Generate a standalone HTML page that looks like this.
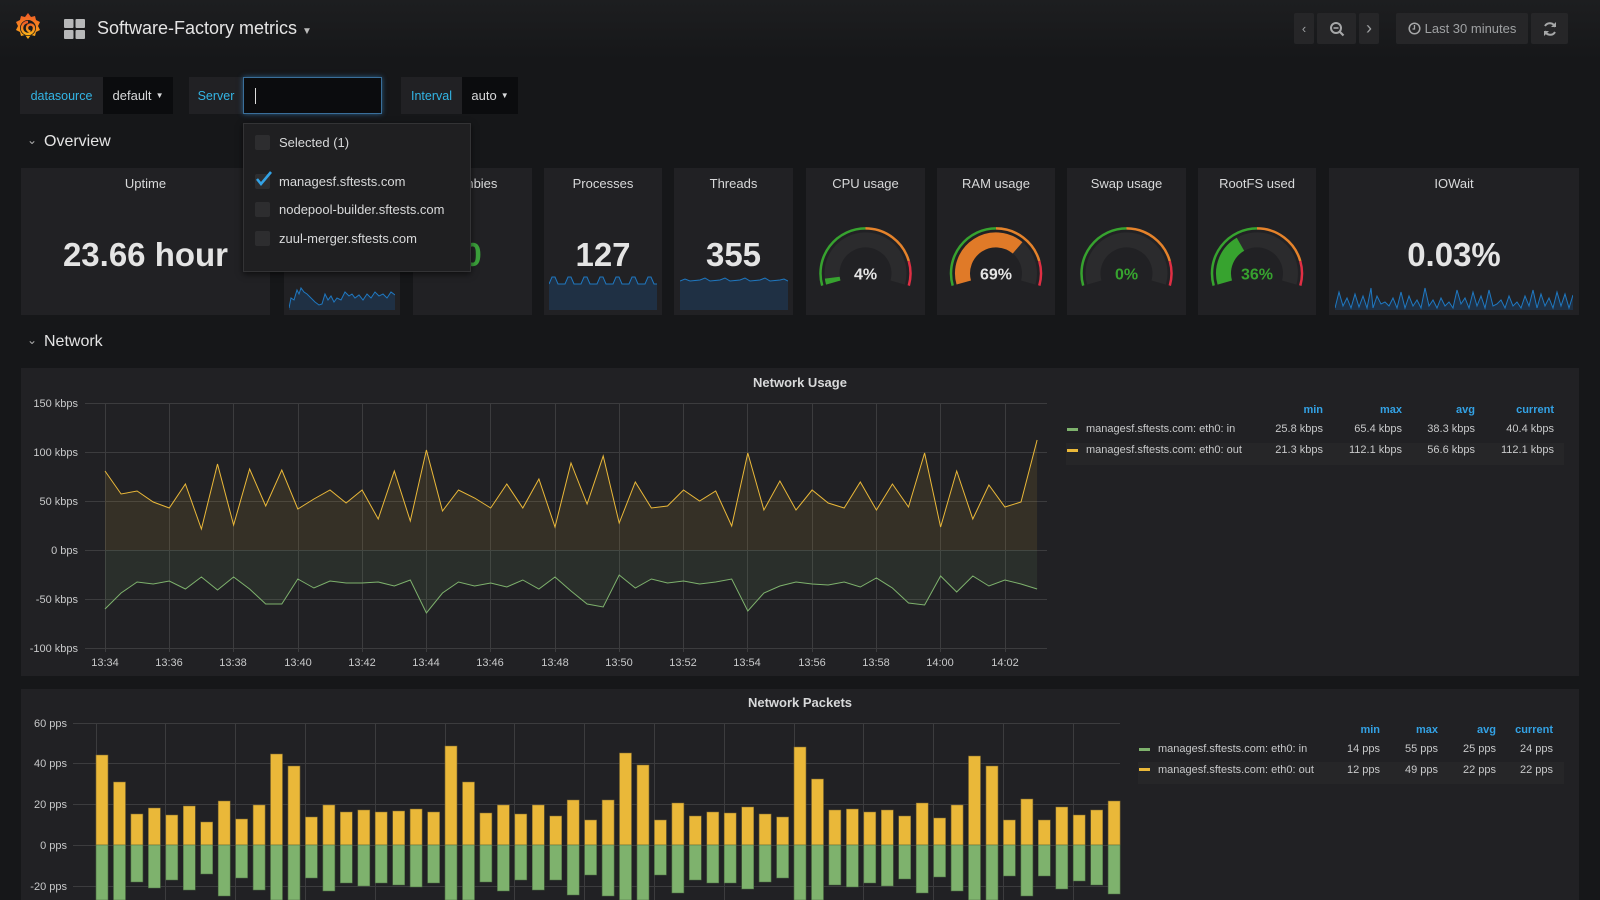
<!DOCTYPE html>
<html><head><meta charset="utf-8"><style>
*{margin:0;padding:0;box-sizing:border-box}
body{width:1600px;height:900px;overflow:hidden;background:#161719;font-family:"Liberation Sans",sans-serif;color:#d8d9da;position:relative}
.a{position:absolute}
.hdr{left:0;top:0;width:1600px;height:60px;background:linear-gradient(#1d1e20,#161719)}
.btn{background:#262628;border-radius:2px;height:31px;top:13px;display:flex;align-items:center;justify-content:center;color:#9fa1a3;font-size:13px}
.lbl{background:#212124;color:#33b5e5;font-size:12.5px;display:flex;align-items:center;justify-content:center;height:37px;top:77px}
.val{background:#0b0c0e;color:#d8d9da;font-size:13px;display:flex;align-items:center;justify-content:center;height:37px;top:77px}
.panel{background:#212124;top:168px;height:147px}
.pt{position:absolute;top:8px;width:100%;text-align:center;font-size:13px;color:#d8d9da}
.big{position:absolute;width:100%;text-align:center;font-weight:bold;font-size:33px;top:68px;color:#e4e4e4}
.sec{font-size:16px;color:#e4e4e4}
.dd{left:243px;top:123px;width:228px;height:149px;background:#1f1f21;border:1px solid #333335;box-shadow:0 2px 6px rgba(0,0,0,.6)}
.cb{position:absolute;left:11px;width:15px;height:15px;background:#2d2d2f;border-radius:2px}
.it{position:absolute;left:35px;font-size:13px;color:#d8d9da}
.lg{font-size:11px;color:#d8d9da}
.lh{color:#33a2e5;font-weight:bold;font-size:11px}
</style></head><body>
<div class="a hdr"></div>
<!-- logo -->
<svg class="a" style="left:12px;top:11px" width="32" height="34" viewBox="0 0 32 34">
<defs><linearGradient id="lg1" x1="0" y1="1" x2="0" y2="0"><stop offset="0" stop-color="#fbb017"/><stop offset="1" stop-color="#f05a28"/></linearGradient></defs>
<path d="M16 2l3 4 4-1 1 4 4 2-2 4 2 4-4 2-1 4-4-1-3 4-3-4-4 1-1-4-4-2 2-4-2-4 4-2 1-4 4 1z" fill="url(#lg1)"/>
<circle cx="16" cy="17" r="8" fill="#1b1c1e"/>
<path d="M16 11a6 6 0 1 0 6 6a3.5 3.5 0 1 0 -3.5 3.5" fill="none" stroke="url(#lg1)" stroke-width="2.4"/>
</svg>
<!-- grid icon -->
<svg class="a" style="left:64px;top:19px" width="21" height="20"><rect x="0" y="0" width="9.5" height="9" rx="1" fill="#b7b8b9"/><rect x="11.5" y="0" width="9.5" height="9" rx="1" fill="#b7b8b9"/><rect x="0" y="11" width="9.5" height="9" rx="1" fill="#b7b8b9"/><rect x="11.5" y="11" width="9.5" height="9" rx="1" fill="#b7b8b9"/></svg>
<div class="a" style="left:97px;top:18px;font-size:18px;color:#e4e4e4">Software-Factory metrics <span style="font-size:10px;color:#bbb">▼</span></div>
<div class="a btn" style="left:1294px;width:20px">&#x2039;</div>
<div class="a btn" style="left:1317px;width:39px"><svg width="16" height="16"><circle cx="7" cy="7" r="5" fill="none" stroke="#a6a7a8" stroke-width="2"/><line x1="4.5" y1="7" x2="9.5" y2="7" stroke="#a6a7a8" stroke-width="1.6"/><line x1="10.5" y1="10.5" x2="14.5" y2="14.5" stroke="#a6a7a8" stroke-width="2.2"/></svg></div>
<div class="a btn" style="left:1359px;width:20px;font-size:18px">&#x203A;</div>
<div class="a btn" style="left:1396px;width:132px"><svg width="13" height="13" style="margin-right:4px"><circle cx="6.5" cy="6.5" r="5.3" fill="none" stroke="#a6a7a8" stroke-width="1.5"/><path d="M6.5 3v4h-2" fill="none" stroke="#a6a7a8" stroke-width="1.3"/></svg>Last 30 minutes</div>
<div class="a btn" style="left:1531px;width:37px"><svg width="16" height="16"><path d="M13 6a5.5 5.5 0 0 0 -10 -1M3 10a5.5 5.5 0 0 0 10 1" fill="none" stroke="#a6a7a8" stroke-width="2"/><path d="M14 1v5h-5zM2 15v-5h5z" fill="#a6a7a8"/></svg></div>

<div class="a lbl" style="left:20px;width:83px">datasource</div>
<div class="a val" style="left:103px;width:70px">default <span style="font-size:8px;margin-left:4px">▼</span></div>
<div class="a lbl" style="left:189px;width:54px">Server</div>
<div class="a val" style="left:243px;width:139px;border:1px solid #3a6f9a;box-shadow:0 0 5px #2a5e8a;justify-content:flex-start;padding-left:11px"><span style="width:1px;height:16px;background:#ddd"></span></div>
<div class="a lbl" style="left:401px;width:61px">Interval</div>
<div class="a val" style="left:462px;width:56px">auto <span style="font-size:8px;margin-left:4px">▼</span></div>

<div class="a sec" style="left:27px;top:133px;font-size:12px;color:#aaa">&#8964;</div>
<div class="a sec" style="left:44px;top:133px">Overview</div>

<div class="a panel" style="left:21px;width:249px"><div class="pt">Uptime</div><div class="big">23.66 hour</div></div>
<div class="a panel" style="left:284px;width:116px">
<svg class="a" style="left:5px;top:112px" width="106" height="30"><path d="M0 28L2 18 5 20 8 10 10 14 12 8 15 12 18 14 22 18 26 22 30 25 33 24 36 14 39 20 42 16 45 22 48 18 52 20 56 12 60 16 63 14 66 18 70 15 74 20 78 14 82 18 86 12 90 16 94 14 98 18 102 12 106 15V30H0z" fill="#1f3044"/><path d="M0 28L2 18 5 20 8 10 10 14 12 8 15 12 18 14 22 18 26 22 30 25 33 24 36 14 39 20 42 16 45 22 48 18 52 20 56 12 60 16 63 14 66 18 70 15 74 20 78 14 82 18 86 12 90 16 94 14 98 18 102 12 106 15" fill="none" stroke="#1f78c1" stroke-width="1"/></svg></div>
<div class="a panel" style="left:413px;width:119px"><div class="pt">Zombies</div><div class="big" style="color:#3ba03b">0</div></div>
<div class="a panel" style="left:544px;width:118px"><div class="pt">Processes</div><div class="big">127</div>
<svg class="a" style="left:5px;top:106px" width="108" height="36"><path d="M0 10L3 3 6 3 9 10 16 10 19 3 22 3 25 10 32 10 35 3 38 3 41 10 48 10 51 3 54 3 57 10 64 10 67 3 70 3 73 10 80 10 83 3 86 3 89 10 96 10 99 3 102 3 105 10 108 10V36H0z" fill="#1f3044"/><path d="M0 10L3 3 6 3 9 10 16 10 19 3 22 3 25 10 32 10 35 3 38 3 41 10 48 10 51 3 54 3 57 10 64 10 67 3 70 3 73 10 80 10 83 3 86 3 89 10 96 10 99 3 102 3 105 10 108 10" fill="none" stroke="#1f78c1"/></svg></div>
<div class="a panel" style="left:674px;width:119px"><div class="pt">Threads</div><div class="big">355</div>
<svg class="a" style="left:6px;top:106px" width="108" height="36"><path d="M0 7L5 5 10 7 20 6 25 4 30 7 40 6 45 4 50 7 60 6 65 4 70 7 80 6 85 4 90 7 100 6 104 5 108 7V36H0z" fill="#1f3044"/><path d="M0 7L5 5 10 7 20 6 25 4 30 7 40 6 45 4 50 7 60 6 65 4 70 7 80 6 85 4 90 7 100 6 104 5 108 7" fill="none" stroke="#1f78c1"/></svg></div>

<!-- gauges -->
<div class="a panel" style="left:806px;width:119px"><div class="pt">CPU usage</div>
<svg class="a" style="left:0;top:0" width="119" height="147"><g transform="translate(59.5,105.4)">
<path d="M-32.23 9.12A33.5 33.5 0 1 1 32.23 9.12" fill="none" stroke="#2b2b2d" stroke-width="15"/>
<path d="M-32.23 9.12A33.5 33.5 0 0 1 -33.23 4.28" fill="none" stroke="#37a32f" stroke-width="15"/>
<path d="M-43.3 12.25A45 45 0 0 1 0 -45" fill="none" stroke="#37a32f" stroke-width="2.5"/><path d="M0 -45A45 45 0 0 1 43.28 -12.33" fill="none" stroke="#e5832b" stroke-width="2.5"/><path d="M43.28 -12.33A45 45 0 0 1 43.3 12.25" fill="none" stroke="#e02f44" stroke-width="2.5"/>
<text x="0" y="6" text-anchor="middle" font-size="16" font-weight="bold" fill="#e4e4e4" font-family="Liberation Sans">4%</text></g></svg></div>
<div class="a panel" style="left:937px;width:118px"><div class="pt">RAM usage</div>
<svg class="a" style="left:0;top:0" width="118" height="147"><g transform="translate(59,105.4)">
<path d="M-32.23 9.12A33.5 33.5 0 1 1 32.23 9.12" fill="none" stroke="#2b2b2d" stroke-width="15"/>
<path d="M-32.23 9.12A33.5 33.5 0 0 1 21.62 -25.59" fill="none" stroke="#e07a28" stroke-width="15"/>
<path d="M-43.3 12.25A45 45 0 0 1 0 -45" fill="none" stroke="#37a32f" stroke-width="2.5"/><path d="M0 -45A45 45 0 0 1 43.28 -12.33" fill="none" stroke="#e5832b" stroke-width="2.5"/><path d="M43.28 -12.33A45 45 0 0 1 43.3 12.25" fill="none" stroke="#e02f44" stroke-width="2.5"/>
<text x="0" y="6" text-anchor="middle" font-size="16" font-weight="bold" fill="#e4e4e4" font-family="Liberation Sans">69%</text></g></svg></div>
<div class="a panel" style="left:1067px;width:119px"><div class="pt">Swap usage</div>
<svg class="a" style="left:0;top:0" width="119" height="147"><g transform="translate(59.5,105.4)">
<path d="M-32.23 9.12A33.5 33.5 0 1 1 32.23 9.12" fill="none" stroke="#2b2b2d" stroke-width="15"/>
<path d="M-43.3 12.25A45 45 0 0 1 0 -45" fill="none" stroke="#37a32f" stroke-width="2.5"/><path d="M0 -45A45 45 0 0 1 43.28 -12.33" fill="none" stroke="#e5832b" stroke-width="2.5"/><path d="M43.28 -12.33A45 45 0 0 1 43.3 12.25" fill="none" stroke="#e02f44" stroke-width="2.5"/>
<text x="0" y="6" text-anchor="middle" font-size="16" font-weight="bold" fill="#37a32f" font-family="Liberation Sans">0%</text></g></svg></div>
<div class="a panel" style="left:1198px;width:118px"><div class="pt">RootFS used</div>
<svg class="a" style="left:0;top:0" width="118" height="147"><g transform="translate(59,105.4)">
<path d="M-32.23 9.12A33.5 33.5 0 1 1 32.23 9.12" fill="none" stroke="#2b2b2d" stroke-width="15"/>
<path d="M-32.23 9.12A33.5 33.5 0 0 1 -16.55 -29.13" fill="none" stroke="#37a32f" stroke-width="15"/>
<path d="M-43.3 12.25A45 45 0 0 1 0 -45" fill="none" stroke="#37a32f" stroke-width="2.5"/><path d="M0 -45A45 45 0 0 1 43.28 -12.33" fill="none" stroke="#e5832b" stroke-width="2.5"/><path d="M43.28 -12.33A45 45 0 0 1 43.3 12.25" fill="none" stroke="#e02f44" stroke-width="2.5"/>
<text x="0" y="6" text-anchor="middle" font-size="16" font-weight="bold" fill="#37a32f" font-family="Liberation Sans">36%</text></g></svg></div>
<div class="a panel" style="left:1329px;width:250px"><div class="pt">IOWait</div><div class="big">0.03%</div>
<svg class="a" style="left:6px;top:112px" width="238" height="30"><path d="M0 28L4 12 8 26 12 18 16 28 20 14 24 27 28 16 32 28 36 8 38 28 42 16 46 24 50 22 54 26 58 18 62 28 66 12 70 28 74 16 78 26 82 20 86 28 90 8 94 26 98 20 102 28 106 18 110 26 114 22 118 28 122 10 126 24 130 18 134 28 138 12 142 26 146 16 150 28 154 10 158 26 162 24 166 20 170 28 174 16 178 26 182 22 186 28 190 16 194 26 198 10 202 28 206 14 210 26 214 18 218 28 222 12 226 26 230 14 234 28 238 15V30H0z" fill="#1f3044"/><path d="M0 28L4 12 8 26 12 18 16 28 20 14 24 27 28 16 32 28 36 8 38 28 42 16 46 24 50 22 54 26 58 18 62 28 66 12 70 28 74 16 78 26 82 20 86 28 90 8 94 26 98 20 102 28 106 18 110 26 114 22 118 28 122 10 126 24 130 18 134 28 138 12 142 26 146 16 150 28 154 10 158 26 162 24 166 20 170 28 174 16 178 26 182 22 186 28 190 16 194 26 198 10 202 28 206 14 210 26 214 18 218 28 222 12 226 26 230 14 234 28 238 15" fill="none" stroke="#1f78c1"/></svg></div>

<div class="a sec" style="left:27px;top:333px;font-size:12px;color:#aaa">&#8964;</div>
<div class="a sec" style="left:44px;top:333px">Network</div>

<!-- Network usage -->
<div class="a" style="left:21px;top:368px;width:1558px;height:308px;background:#212124"></div>
<div class="a" style="left:21px;top:375px;width:1558px;text-align:center;font-size:13px;font-weight:bold;color:#d8d9da">Network Usage</div>
<svg class="a" style="left:0;top:0" width="1600" height="900" font-family="Liberation Sans" font-size="11" fill="#c8c9ca">
<g stroke="#3c3c3e" stroke-width="1">
<line x1="85" y1="403.5" x2="1047" y2="403.5"/><line x1="85" y1="452.5" x2="1047" y2="452.5"/><line x1="85" y1="501.5" x2="1047" y2="501.5"/><line x1="85" y1="550.5" x2="1047" y2="550.5"/><line x1="85" y1="599.5" x2="1047" y2="599.5"/><line x1="85" y1="648.5" x2="1047" y2="648.5"/>
<line x1="105.5" y1="403" x2="105.5" y2="652"/><line x1="169.5" y1="403" x2="169.5" y2="652"/><line x1="233.5" y1="403" x2="233.5" y2="652"/><line x1="298.5" y1="403" x2="298.5" y2="652"/><line x1="362.5" y1="403" x2="362.5" y2="652"/><line x1="426.5" y1="403" x2="426.5" y2="652"/><line x1="490.5" y1="403" x2="490.5" y2="652"/><line x1="555.5" y1="403" x2="555.5" y2="652"/><line x1="619.5" y1="403" x2="619.5" y2="652"/><line x1="683.5" y1="403" x2="683.5" y2="652"/><line x1="747.5" y1="403" x2="747.5" y2="652"/><line x1="812.5" y1="403" x2="812.5" y2="652"/><line x1="876.5" y1="403" x2="876.5" y2="652"/><line x1="940.5" y1="403" x2="940.5" y2="652"/><line x1="1005.5" y1="403" x2="1005.5" y2="652"/>
</g>
<g text-anchor="end"><text x="78" y="407">150 kbps</text><text x="78" y="456">100 kbps</text><text x="78" y="505">50 kbps</text><text x="78" y="554">0 bps</text><text x="78" y="603">-50 kbps</text><text x="78" y="652">-100 kbps</text></g>
<g text-anchor="middle"><text x="105" y="666">13:34</text><text x="169" y="666">13:36</text><text x="233" y="666">13:38</text><text x="298" y="666">13:40</text><text x="362" y="666">13:42</text><text x="426" y="666">13:44</text><text x="490" y="666">13:46</text><text x="555" y="666">13:48</text><text x="619" y="666">13:50</text><text x="683" y="666">13:52</text><text x="747" y="666">13:54</text><text x="812" y="666">13:56</text><text x="876" y="666">13:58</text><text x="940" y="666">14:00</text><text x="1005" y="666">14:02</text></g>
<path d="M105 471L121.1 494 137.1 491 153.2 502 169.3 508 185.4 484 201.4 529 217.5 464 233.6 525 249.6 469 265.7 506 281.8 470 297.8 509 313.9 499 330 490 346.1 503 362.1 490 378.2 519 394.3 471 410.3 521 426.4 450 442.5 511 458.5 490 474.6 498 490.7 508 506.8 484 522.8 508 538.9 479 555 527 571 463 587.1 504 603.2 456 619.2 523 635.3 482 651.4 508 667.5 506 683.5 490 699.6 501 715.7 491 731.7 526 747.8 453 763.9 510 779.9 481 796 510 812.1 490 828.2 503 844.2 508 860.3 482 876.4 510 892.4 484 908.5 507 924.6 453 940.6 527 956.7 471 972.8 519 988.9 485 1004.9 507 1021 502 1037.1 440L1037.1 550 105 550z" fill="#eab839" fill-opacity="0.1"/>
<path d="M105 609L121.1 593 137.1 582 153.2 584 169.3 581 185.4 589 201.4 577 217.5 590 233.6 577 249.6 589 265.7 604 281.8 604 297.8 579 313.9 588 330 581 346.1 583 362.1 583 378.2 582 394.3 586 410.3 580 426.4 613 442.5 593 458.5 582 474.6 586 490.7 583 506.8 587 522.8 580 538.9 589 555 577 571 591 587.1 604 603.2 607 619.2 575 635.3 588 651.4 579 667.5 583 683.5 581 699.6 584 715.7 582 731.7 579 747.8 611 763.9 593 779.9 586 796 582 812.1 584 828.2 585 844.2 582 860.3 587 876.4 578 892.4 588 908.5 603 924.6 605 940.6 576 956.7 592 972.8 576 988.9 586 1004.9 580 1021 584 1037.1 589L1037.1 550 105 550z" fill="#7eb26d" fill-opacity="0.1"/>
<polyline points="105,471 121.1,494 137.1,491 153.2,502 169.3,508 185.4,484 201.4,529 217.5,464 233.6,525 249.6,469 265.7,506 281.8,470 297.8,509 313.9,499 330,490 346.1,503 362.1,490 378.2,519 394.3,471 410.3,521 426.4,450 442.5,511 458.5,490 474.6,498 490.7,508 506.8,484 522.8,508 538.9,479 555,527 571,463 587.1,504 603.2,456 619.2,523 635.3,482 651.4,508 667.5,506 683.5,490 699.6,501 715.7,491 731.7,526 747.8,453 763.9,510 779.9,481 796,510 812.1,490 828.2,503 844.2,508 860.3,482 876.4,510 892.4,484 908.5,507 924.6,453 940.6,527 956.7,471 972.8,519 988.9,485 1004.9,507 1021,502 1037.1,440" fill="none" stroke="#eab839" stroke-width="1"/>
<polyline points="105,609 121.1,593 137.1,582 153.2,584 169.3,581 185.4,589 201.4,577 217.5,590 233.6,577 249.6,589 265.7,604 281.8,604 297.8,579 313.9,588 330,581 346.1,583 362.1,583 378.2,582 394.3,586 410.3,580 426.4,613 442.5,593 458.5,582 474.6,586 490.7,583 506.8,587 522.8,580 538.9,589 555,577 571,591 587.1,604 603.2,607 619.2,575 635.3,588 651.4,579 667.5,583 683.5,581 699.6,584 715.7,582 731.7,579 747.8,611 763.9,593 779.9,586 796,582 812.1,584 828.2,585 844.2,582 860.3,587 876.4,578 892.4,588 908.5,603 924.6,605 940.6,576 956.7,592 972.8,576 988.9,586 1004.9,580 1021,584 1037.1,589" fill="none" stroke="#7eb26d" stroke-width="1"/>
<!-- legend usage -->
<rect x="1066" y="443" width="498" height="22" fill="#262628"/>
<g class="lh" fill="#33a2e5" font-weight="bold" text-anchor="end"><text x="1323" y="413">min</text><text x="1402" y="413">max</text><text x="1475" y="413">avg</text><text x="1554" y="413">current</text></g>
<rect x="1067" y="428" width="11" height="3" fill="#7eb26d"/><rect x="1067" y="449" width="11" height="3" fill="#eab839"/>
<text x="1086" y="432">managesf.sftests.com: eth0: in</text><text x="1086" y="453">managesf.sftests.com: eth0: out</text>
<g text-anchor="end"><text x="1323" y="432">25.8 kbps</text><text x="1402" y="432">65.4 kbps</text><text x="1475" y="432">38.3 kbps</text><text x="1554" y="432">40.4 kbps</text>
<text x="1323" y="453">21.3 kbps</text><text x="1402" y="453">112.1 kbps</text><text x="1475" y="453">56.6 kbps</text><text x="1554" y="453">112.1 kbps</text></g>
</svg>

<!-- Network packets -->
<div class="a" style="left:21px;top:689px;width:1558px;height:211px;background:#212124"></div>
<div class="a" style="left:21px;top:695px;width:1558px;text-align:center;font-size:13px;font-weight:bold;color:#d8d9da">Network Packets</div>
<svg class="a" style="left:0;top:0" width="1600" height="900" font-family="Liberation Sans" font-size="11" fill="#c8c9ca">
<g stroke="#3c3c3e"><line x1="73" y1="723.5" x2="1120" y2="723.5"/><line x1="73" y1="763.5" x2="1120" y2="763.5"/><line x1="73" y1="804.5" x2="1120" y2="804.5"/><line x1="73" y1="845.5" x2="1120" y2="845.5"/><line x1="73" y1="886.5" x2="1120" y2="886.5"/>
<line x1="96.5" y1="723" x2="96.5" y2="900"/><line x1="165.5" y1="723" x2="165.5" y2="900"/><line x1="235.5" y1="723" x2="235.5" y2="900"/><line x1="305.5" y1="723" x2="305.5" y2="900"/><line x1="375.5" y1="723" x2="375.5" y2="900"/><line x1="445.5" y1="723" x2="445.5" y2="900"/><line x1="514.5" y1="723" x2="514.5" y2="900"/><line x1="584.5" y1="723" x2="584.5" y2="900"/><line x1="654.5" y1="723" x2="654.5" y2="900"/><line x1="724.5" y1="723" x2="724.5" y2="900"/><line x1="794.5" y1="723" x2="794.5" y2="900"/><line x1="863.5" y1="723" x2="863.5" y2="900"/><line x1="933.5" y1="723" x2="933.5" y2="900"/><line x1="1003.5" y1="723" x2="1003.5" y2="900"/><line x1="1073.5" y1="723" x2="1073.5" y2="900"/></g>
<g text-anchor="end"><text x="67" y="727">60 pps</text><text x="67" y="767">40 pps</text><text x="67" y="808">20 pps</text><text x="67" y="849">0 pps</text><text x="67" y="890">-20 pps</text></g>
<path fill="#eab839" stroke="#7a6530" stroke-width="0.6" d="M96 755h12v90h-12zM113.5 782h12v63h-12zM130.9 814h12v31h-12zM148.4 808h12v37h-12zM165.8 815h12v30h-12zM183.3 806h12v39h-12zM200.7 822h12v23h-12zM218.2 801h12v44h-12zM235.6 819h12v26h-12zM253.1 805h12v40h-12zM270.5 754h12v91h-12zM288 766h12v79h-12zM305.4 817h12v28h-12zM322.9 805h12v40h-12zM340.3 812h12v33h-12zM357.8 810h12v35h-12zM375.2 812h12v33h-12zM392.7 811h12v34h-12zM410.1 809h12v36h-12zM427.6 812h12v33h-12zM445 746h12v99h-12zM462.5 782h12v63h-12zM479.9 813h12v32h-12zM497.4 805h12v40h-12zM514.8 814h12v31h-12zM532.3 805h12v40h-12zM549.7 816h12v29h-12zM567.2 800h12v45h-12zM584.6 820h12v25h-12zM602.1 800h12v45h-12zM619.5 753h12v92h-12zM637 765h12v80h-12zM654.4 820h12v25h-12zM671.9 803h12v42h-12zM689.3 816h12v29h-12zM706.8 812h12v33h-12zM724.2 813h12v32h-12zM741.7 807h12v38h-12zM759.1 814h12v31h-12zM776.6 817h12v28h-12zM794 747h12v98h-12zM811.5 779h12v66h-12zM828.9 810h12v35h-12zM846.4 809h12v36h-12zM863.8 812h12v33h-12zM881.3 810h12v35h-12zM898.7 816h12v29h-12zM916.2 803h12v42h-12zM933.6 818h12v27h-12zM951.1 805h12v40h-12zM968.5 756h12v89h-12zM986 766h12v79h-12zM1003.4 820h12v25h-12zM1020.9 799h12v46h-12zM1038.3 820h12v25h-12zM1055.8 807h12v38h-12zM1073.2 815h12v30h-12zM1090.7 810h12v35h-12zM1108.1 801h12v44h-12z"/>
<path fill="#7eb26d" stroke="#4a6a40" stroke-width="0.6" d="M96 845h12v55h-12zM113.5 845h12v55h-12zM130.9 845h12v37h-12zM148.4 845h12v43h-12zM165.8 845h12v35h-12zM183.3 845h12v45h-12zM200.7 845h12v29h-12zM218.2 845h12v51h-12zM235.6 845h12v33h-12zM253.1 845h12v45h-12zM270.5 845h12v55h-12zM288 845h12v55h-12zM305.4 845h12v33h-12zM322.9 845h12v46h-12zM340.3 845h12v38h-12zM357.8 845h12v41h-12zM375.2 845h12v38h-12zM392.7 845h12v40h-12zM410.1 845h12v42h-12zM427.6 845h12v38h-12zM445 845h12v55h-12zM462.5 845h12v55h-12zM479.9 845h12v37h-12zM497.4 845h12v46h-12zM514.8 845h12v35h-12zM532.3 845h12v45h-12zM549.7 845h12v35h-12zM567.2 845h12v50h-12zM584.6 845h12v30h-12zM602.1 845h12v51h-12zM619.5 845h12v55h-12zM637 845h12v55h-12zM654.4 845h12v30h-12zM671.9 845h12v48h-12zM689.3 845h12v35h-12zM706.8 845h12v38h-12zM724.2 845h12v38h-12zM741.7 845h12v44h-12zM759.1 845h12v37h-12zM776.6 845h12v33h-12zM794 845h12v55h-12zM811.5 845h12v55h-12zM828.9 845h12v40h-12zM846.4 845h12v42h-12zM863.8 845h12v38h-12zM881.3 845h12v41h-12zM898.7 845h12v34h-12zM916.2 845h12v48h-12zM933.6 845h12v32h-12zM951.1 845h12v46h-12zM968.5 845h12v55h-12zM986 845h12v55h-12zM1003.4 845h12v31h-12zM1020.9 845h12v51h-12zM1038.3 845h12v31h-12zM1055.8 845h12v44h-12zM1073.2 845h12v36h-12zM1090.7 845h12v40h-12zM1108.1 845h12v49h-12z"/>
<rect x="1138" y="762" width="426" height="22" fill="#262628"/>
<g fill="#33a2e5" font-weight="bold" text-anchor="end"><text x="1380" y="733">min</text><text x="1438" y="733">max</text><text x="1496" y="733">avg</text><text x="1553" y="733">current</text></g>
<rect x="1139" y="748" width="11" height="3" fill="#7eb26d"/><rect x="1139" y="768" width="11" height="3" fill="#eab839"/>
<text x="1158" y="752">managesf.sftests.com: eth0: in</text><text x="1158" y="773">managesf.sftests.com: eth0: out</text>
<g text-anchor="end"><text x="1380" y="752">14 pps</text><text x="1438" y="752">55 pps</text><text x="1496" y="752">25 pps</text><text x="1553" y="752">24 pps</text>
<text x="1380" y="773">12 pps</text><text x="1438" y="773">49 pps</text><text x="1496" y="773">22 pps</text><text x="1553" y="773">22 pps</text></g>
</svg>

<!-- dropdown -->
<div class="a dd">
<div class="cb" style="top:11px"></div><div class="it" style="top:11px">Selected (1)</div>
<div class="cb" style="top:50px"></div><svg class="a" style="left:11px;top:46px" width="18" height="18"><path d="M2 9l4 5 10-12" fill="none" stroke="#33a2e5" stroke-width="2.6"/></svg><div class="it" style="top:50px">managesf.sftests.com</div>
<div class="cb" style="top:78px"></div><div class="it" style="top:78px">nodepool-builder.sftests.com</div>
<div class="cb" style="top:107px"></div><div class="it" style="top:107px">zuul-merger.sftests.com</div>
</div>
</body></html>
